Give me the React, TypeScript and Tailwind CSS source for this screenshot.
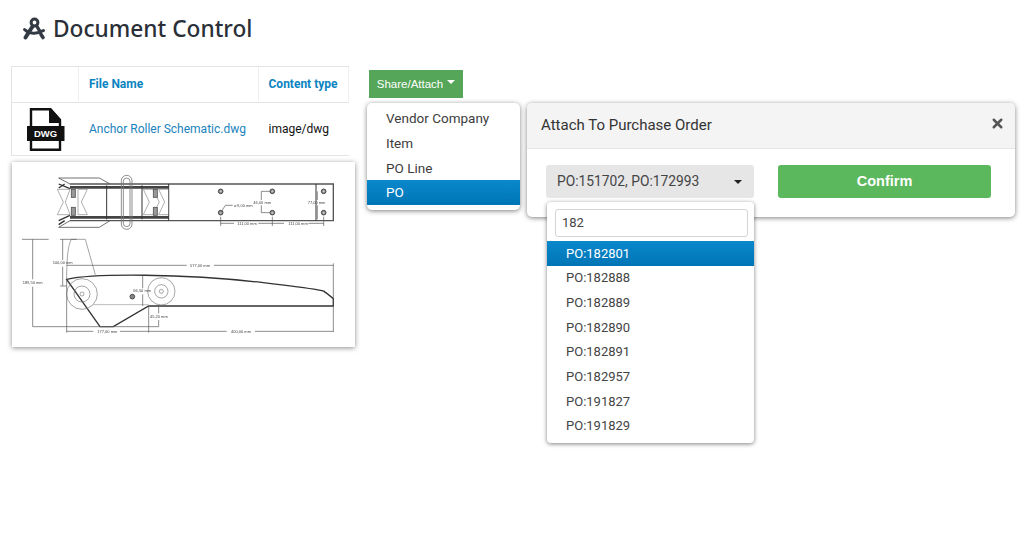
import { X } from "lucide-react";

const CompassIcon = () => (
    <svg width="24" height="25" viewBox="0 0 24 25" className="shrink-0" fill="none" stroke="#333a44" strokeLinecap="round" strokeLinejoin="round">
        <circle cx="12.5" cy="6.5" r="3.4" strokeWidth="3" />
        <path d="M10.5 10.5 3.5 21.5" strokeWidth="4" />
        <path d="M15 10.5l3 5" strokeWidth="3.4" />
        <path d="M2.5 13.5C7 18 15 18.5 21.5 14.5" strokeWidth="3" />
        <path d="M19 18.5l2 3" strokeWidth="3.6" />
    </svg>
);

const DwgIcon = () => (
    <svg width="38" height="43" viewBox="0 0 38 43" fill="none">
        <path d="M4 18V1.2h19L33 12v6" stroke="#111" strokeWidth="2.4" />
        <path d="M22 0h2l10 11.5V15H22z" fill="#111" />
        <rect x="0" y="18" width="37.5" height="15" fill="#111" />
        <path d="M4 33v8.8h29V33" stroke="#111" strokeWidth="2.4" />
        <text x="18.5" y="29" textAnchor="middle" fill="#fff" fontSize="9.5" fontWeight="700" fontFamily="Liberation Sans, sans-serif">DWG</text>
    </svg>
);

const Schematic = () => (
    <svg width="343" height="185" viewBox="6 6 1029 555" fill="none" stroke="#333" strokeWidth="2.5" className="block blur-[0.35px]">
        {/* top view */}
        <path d="M180 72H970V182H180" strokeWidth="4" stroke="#555" />
        <path d="M180 82H476M180 172H476" strokeWidth="8" stroke="#444" />
        <path d="M476 72V182M290 76V178M396 76V178M918 72V182" strokeWidth="3" />
        <path d="M146 54H268L300 72M146 54L180 72M146 202H268L300 182M146 202L180 182" stroke="#555" />
        <path d="M146 72L180 86M146 84L164 72M146 182L180 166M146 194L164 182" strokeWidth="4" />
        <path d="M142 88H180L166 126L180 164H142L160 126Z" stroke="#888" strokeWidth="2" />
        <path d="M204 88H232L214 126L232 164H204Z" stroke="#888" strokeWidth="2" />
        <path d="M400 88H428L448 126L428 164H400L418 126Z" stroke="#888" strokeWidth="2" />
        <path d="M476 88H446L464 126L446 164H476Z" stroke="#888" strokeWidth="2" />
        <rect x="184" y="88" width="12" height="24" fill="#999" stroke="#555" />
        <rect x="184" y="142" width="12" height="24" fill="#999" stroke="#555" />
        <rect x="430" y="88" width="12" height="24" fill="#999" stroke="#555" />
        <rect x="430" y="142" width="12" height="24" fill="#999" stroke="#555" />
        <rect x="334" y="46" width="32" height="162" rx="16" stroke="#777" />
        <rect x="340" y="54" width="20" height="146" rx="10" stroke="#777" />
        {[[632, 94], [787, 94], [941, 94], [632, 158], [787, 158], [941, 158]].map(([x, y]) => (
            <g key={`${x}-${y}`}>
                <circle cx={x} cy={y} r="7" fill="#888" stroke="#333" />
                <circle cx={x} cy={y} r="3" fill="#ccc" stroke="none" />
            </g>
        ))}
        <path d="M754 94H780M754 158H780M754 94V120M754 136V158M922 94V120M922 136V178" stroke="#555" strokeWidth="2" />
        <path d="M632 190H672M745 190H787M787 190H822M895 190H941M632 170V198M787 170V198M941 170V198M632 158L646 136H668" stroke="#555" strokeWidth="2" />
        {/* side view */}
        <path d="M184 238H226L256 344" stroke="#777" strokeWidth="2" />
        <path d="M184 238C178 250 170 270 170 358" stroke="#777" strokeWidth="2" />
        <path d="M170 358C250 340 520 340 760 368S930 396 948 398L970 416V438H416L310 500H270L170 358Z" strokeWidth="4" />
        <circle cx="216" cy="402" r="46" stroke="#777" strokeWidth="2" />
        <circle cx="216" cy="402" r="24" stroke="#777" strokeWidth="2" />
        <circle cx="216" cy="402" r="6" stroke="#777" strokeWidth="2" />
        <circle cx="454" cy="394" r="41" stroke="#777" strokeWidth="2" />
        <circle cx="454" cy="394" r="20" stroke="#777" strokeWidth="2" />
        <circle cx="454" cy="394" r="6" stroke="#777" strokeWidth="2" />
        <circle cx="367" cy="410" r="7" fill="#888" stroke="#333" />
        <path d="M250 434H416M270 500H310" stroke="#999" strokeWidth="2" />
        <path d="M36 238H116M68 238V358M68 380V500M68 500H446M158 238V300M158 320V378M150 378H170M150 238H200M398 348V385M398 403V438M446 438V460M446 480V500" stroke="#555" strokeWidth="2" />
        <path d="M170 316H530M612 316H970M970 310V516M170 360V518M416 440V518M170 514H250M330 514H416M416 514H650M735 514H970" stroke="#555" strokeWidth="2" />
        <g fill="#444" stroke="none" fontSize="12" fontFamily="Liberation Sans, sans-serif">
            <text x="672" y="141">⌀ 9,00 mm</text>
            <text x="730" y="131">46,00 mm</text>
            <text x="893" y="131">77,00 mm</text>
            <text x="682" y="194">111,00 mm</text>
            <text x="835" y="194">111,00 mm</text>
            <text x="128" y="313">100,00 mm</text>
            <text x="38" y="373">189,50 mm</text>
            <text x="540" y="320">577,00 mm</text>
            <text x="370" y="396">66,50 mm</text>
            <text x="420" y="473">45,20 mm</text>
            <text x="262" y="518">177,00 mm</text>
            <text x="663" y="518">400,00 mm</text>
        </g>
    </svg>
);

const menuItems = ["Vendor Company", "Item", "PO Line", "PO"];
const poOptions = ["PO:182801", "PO:182888", "PO:182889", "PO:182890", "PO:182891", "PO:182957", "PO:191827", "PO:191829"];

const App = () => {
    return (
        <div className="w-[1024px] h-[547px] bg-white overflow-hidden relative font-['Roboto',sans-serif]">
            <div className="flex items-start gap-[7px] pl-[22px] pt-[16px] h-[66px]">
                <CompassIcon />
                <h1 className="text-[22.7px] leading-[26px] font-medium text-[#2a2f38] font-['Noto_Sans',sans-serif]">Document Control</h1>
            </div>

            <div className="flex items-start pl-[11px]">
                <div className="w-[344px] shrink-0">
                    <div className="w-[338px] border-t border-b border-l border-[#e4e4e4]">
                        <div className="flex h-[36px] pb-[1px] border-b border-[#e4e4e4] text-[12px] font-bold text-[#0a84c1]">
                            <div className="w-[67px] border-r border-[#eee]" />
                            <div className="w-[180px] border-r border-[#eee] px-[10px] flex items-center">File Name</div>
                            <div className="w-[90px] border-r border-[#eee] px-[9.5px] flex items-center whitespace-nowrap">Content type</div>
                        </div>
                        <div className="flex h-[52px] items-center text-[12px]">
                            <div className="w-[67px] flex justify-center pl-[1px]"><DwgIcon /></div>
                            <div className="w-[180px] px-[10px] text-[#1a83bd] whitespace-nowrap">Anchor Roller Schematic.dwg</div>
                            <div className="w-[90px] px-[9.5px] text-[#111]">image/dwg</div>
                        </div>
                    </div>
                    <div className="mt-[6px] ml-[1px] w-[343px] h-[185px] bg-white shadow-[0_1px_5px_rgba(0,0,0,0.45)]">
                        <Schematic />
                    </div>
                </div>

                <div className="ml-[12px] pt-[4px]">
                    <button className="ml-[2px] h-[28px] w-[94px] pt-[2px] bg-[#55a658] text-white text-[11.5px] flex items-center justify-center gap-[4px] font-['Liberation_Sans',sans-serif]">
                        Share/Attach
                        <span className="mb-[7px] border-x-[4px] border-t-[4px] border-x-transparent border-t-white" />
                    </button>

                    <div className="flex items-start gap-[7px] mt-[5px]">
                        <div className="w-[153px] h-[107px] bg-white rounded-[5px] py-[3px] shadow-[0_1px_5px_rgba(0,0,0,0.5)] text-[13.5px] text-[#3d3d3d]">
                            {menuItems.map((item) => (
                                <div
                                    key={item}
                                    className={
                                        item === "PO"
                                            ? "h-[25px] pl-[19px] flex items-center text-white bg-gradient-to-b from-[#0a88cc] to-[#0075b5]"
                                            : "h-[24.7px] pl-[19px] flex items-center"
                                    }
                                >
                                    {item}
                                </div>
                            ))}
                        </div>

                        <div className="relative w-[488px] h-[114px] bg-white rounded-[5px] shadow-[0_1px_5px_rgba(0,0,0,0.5)]">
                            <div className="h-[46px] bg-[#f4f4f4] border-b border-[#e6e6e6] rounded-t-[5px] flex items-center justify-between pl-[14px] pr-[10px]">
                                <span className="text-[15px] text-[#333]">Attach To Purchase Order</span>
                                <X size={15} strokeWidth={4} className="text-[#555] mb-[5px]" />
                            </div>
                            <div className="flex pl-[19px] pt-[16px] gap-[24px]">
                                <div className="w-[208px] h-[33px] bg-[#e6e6e6] rounded-[3px] flex items-center justify-between pl-[11px] pr-[12px] text-[13.8px] text-[#444]">
                                    PO:151702, PO:172993
                                    <span className="border-x-[4px] border-t-[4px] border-x-transparent border-t-[#222]" />
                                </div>
                                <button className="w-[213px] h-[33px] bg-[#5cb85c] rounded-[3px] text-white text-[14.5px] font-bold font-['Liberation_Sans',sans-serif]">Confirm</button>
                            </div>

                            <div className="absolute left-[20px] top-[99px] w-[207px] h-[241px] bg-white rounded-[4px] shadow-[0_1px_4px_rgba(0,0,0,0.5)] pt-[7px]">
                                <div className="mx-[8px] w-[193px] h-[28px] border border-[#d4d4d4] rounded-[3px] flex items-center px-[6px] text-[13px] text-[#444]">182</div>
                                <div className="mt-[4px]">
                                    {poOptions.map((po, i) => (
                                        <div
                                            key={po}
                                            className={
                                                i === 0
                                                    ? "h-[24.7px] pl-[19px] flex items-center text-[13px] text-white bg-gradient-to-b from-[#0a88cc] to-[#0075b5]"
                                                    : "h-[24.7px] pl-[19px] flex items-center text-[13px] text-[#444]"
                                            }
                                        >
                                            {po}
                                        </div>
                                    ))}
                                </div>
                            </div>
                        </div>
                    </div>
                </div>
            </div>
        </div>
    );
};

export default App;
